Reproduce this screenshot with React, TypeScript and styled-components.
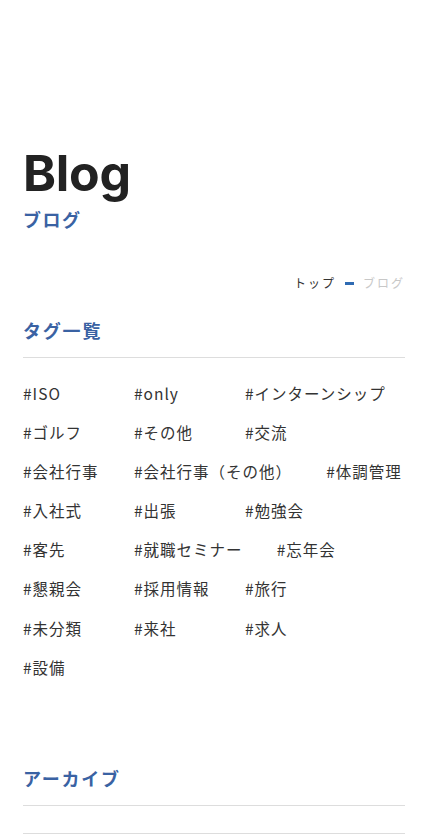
import { FC } from 'react';
import styled, { createGlobalStyle } from 'styled-components';

const TAGS = [
  'ISO',
  'only',
  'インターンシップ',
  'ゴルフ',
  'その他',
  '交流',
  '会社行事',
  '会社行事（その他）',
  '体調管理',
  '入社式',
  '出張',
  '勉強会',
  '客先',
  '就職セミナー',
  '忘年会',
  '懇親会',
  '採用情報',
  '旅行',
  '未分類',
  '来社',
  '求人',
  '設備',
];

const App: FC = () => {
  return (
    <>
      <GlobalStyle />
      <Page>
        <Hero>
          <Title>Blog</Title>
          <SubTitle>ブログ</SubTitle>
        </Hero>
        <Breadcrumb>
          <Crumb href="#">トップ</Crumb>
          <Dash />
          <Current>ブログ</Current>
        </Breadcrumb>
        <Section>
          <SectionTitle>タグ一覧</SectionTitle>
          <TagList>
            {TAGS.map((tag) => (
              <Tag key={tag} href="#">
                #{tag}
              </Tag>
            ))}
          </TagList>
        </Section>
        <Section $spaced>
          <SectionTitle>アーカイブ</SectionTitle>
          <ArchiveList />
        </Section>
      </Page>
    </>
  );
};

// Styles
const GlobalStyle = createGlobalStyle`
  html, body {
    margin: 0;
    padding: 0;
    background: #fff;
  }
  body {
    font-family: "Noto Sans CJK JP", "Noto Sans", sans-serif;
    color: #333;
    -webkit-font-smoothing: antialiased;
  }
  a {
    text-decoration: none;
    color: inherit;
  }
`;

const Page = styled.main`
  padding: 0 23px;
  overflow: hidden;
`;

const Hero = styled.header`
  padding-top: 148px;
`;

const Title = styled.h1`
  margin: 0;
  font-family: Inter, "Liberation Sans", sans-serif;
  font-weight: 700;
  font-size: 50px;
  line-height: 1;
  color: #222;
  letter-spacing: -0.3px;
`;

const SubTitle = styled.p`
  margin: 8px 0 0;
  font-size: 18px;
  font-weight: 700;
  line-height: 1.5;
  letter-spacing: 1.5px;
  color: #3a62a3;
`;

const Breadcrumb = styled.nav`
  display: flex;
  justify-content: flex-end;
  align-items: center;
  gap: 9px;
  margin-top: 40px;
  font-size: 12px;
  line-height: 20px;
  letter-spacing: 2px;
`;

const Crumb = styled.a`
  color: #333;
`;

const Dash = styled.span`
  display: block;
  width: 9px;
  height: 3px;
  background: #2f6bb3;
`;

const Current = styled.span`
  color: #c8c8c8;
`;

const Section = styled.section<{ $spaced?: boolean }>`
  margin-top: ${(p) => (p.$spaced ? '86px' : '24px')};
`;

const SectionTitle = styled.h2`
  margin: 0;
  padding-bottom: 13px;
  border-bottom: 1px solid #ddd;
  font-size: 18px;
  font-weight: 700;
  line-height: 1.5;
  letter-spacing: 1.8px;
  color: #3a62a3;
`;

const TagList = styled.div`
  display: flex;
  flex-wrap: wrap;
  column-gap: 34px;
  row-gap: 15.2px;
  margin-right: -6px;
  padding-top: 22.5px;
`;

const Tag = styled.a`
  min-width: 77px;
  font-size: 15.5px;
  line-height: 24px;
  letter-spacing: 1px;
  color: #333;
`;

const ArchiveList = styled.div`
  height: 27px;
  border-bottom: 1px solid #ddd;
`;

export default App;
